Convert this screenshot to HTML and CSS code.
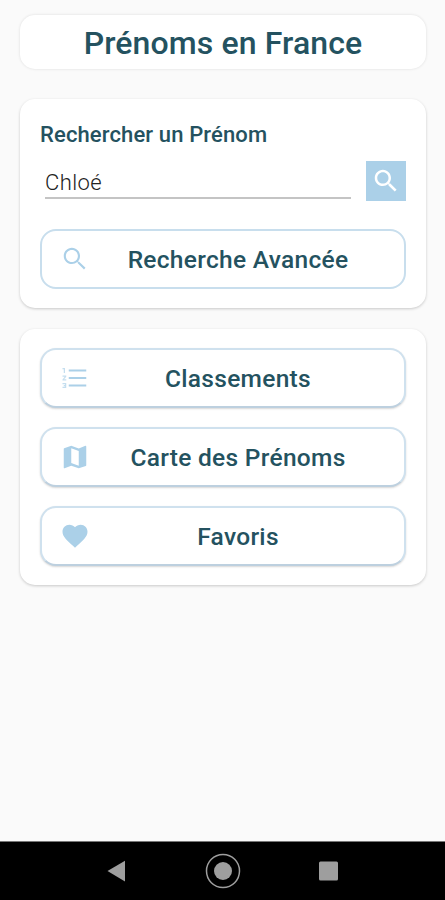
FILE: index.html
```
<!DOCTYPE html>
<html lang="fr">
<head>
<meta charset="utf-8">
<meta name="viewport" content="width=device-width, initial-scale=1">
	<title>Prénoms en France</title>
<link rel="stylesheet" href="styles.css">
</head>
<body>

<div class="content">
	<h1 class="card title">Prénoms en France</h1>

	<div class="card search">
		<label class="label" for="prenom">Rechercher un Prénom</label>
		<div class="row">
			<input id="prenom" class="field" type="text" value="Chloé" spellcheck="false">
			<button class="go" aria-label="Rechercher">
				<svg class="icon" viewBox="0 0 24 24"><path d="M15.5 14h-.79l-.28-.27C15.41 12.59 16 11.11 16 9.5 16 5.91 13.09 3 9.5 3S3 5.91 3 9.5 5.91 16 9.5 16c1.61 0 3.09-.59 4.23-1.57l.27.28v.79l5 4.99L20.49 19l-4.99-5zm-6 0C7.01 14 5 11.99 5 9.5S7.01 5 9.5 5 14 7.01 14 9.5 11.99 14 9.5 14z"/></svg>
			</button>
		</div>
		<button class="btn flat">
			<svg class="icon" viewBox="0 0 24 24"><path d="M15.3 14.2h-.6l-.3-.4C15.5 12.6 16 11.1 16 9.5 16 5.9 13.1 3 9.5 3S3 5.9 3 9.5 5.9 16 9.5 16c1.6 0 3.1-.6 4.3-1.6l.4.3v.6l5 5 1.2-1.2zM9.5 14.3c-2.7 0-4.8-2.1-4.8-4.8s2.1-4.8 4.8-4.8 4.8 2.1 4.8 4.8-2.1 4.8-4.8 4.8z"/></svg>
			<span>Recherche Avancée</span>
		</button>
	</div>

	<div class="card menu">
		<button class="btn">
			<svg class="icon" viewBox="0 0 24 24"><path class="digits" d="M2 17h2v.5H3v1h1v.5H2v1h3v-4H2v1zm1-9h1V4H2v1h1v3zm-1 3h1.8L2 13.1v.9h3v-1H3.2L5 10.9V10H2v1z"/><path d="M7 5.2v1.5h14V5.2H7zm0 13.5h14v-1.5H7v1.5zm0-6h14v-1.5H7v1.5z"/></svg>
			<span>Classements</span>
		</button>
		<button class="btn">
			<svg class="icon" viewBox="0 0 24 24"><path d="M20.5 3l-.16.03L15 5.1 9 3 3.36 4.9c-.21.07-.36.25-.36.48V20.5c0 .28.22.5.5.5l.16-.03L9 18.9l6 2.1 5.64-1.9c.21-.07.36-.25.36-.48V3.5c0-.28-.22-.5-.5-.5zM15 19l-6-2.11V5l6 2.11V19z"/></svg>
			<span>Carte des Prénoms</span>
		</button>
		<button class="btn">
			<svg class="icon" viewBox="0 0 24 24"><path d="M12 21.35l-1.45-1.32C5.4 15.36 2 12.28 2 8.5 2 5.42 4.42 3 7.5 3c1.74 0 3.41.81 4.5 2.09C13.09 3.81 14.76 3 16.5 3 19.58 3 22 5.42 22 8.5c0 3.78-3.4 6.86-8.55 11.54L12 21.35z"/></svg>
			<span>Favoris</span>
		</button>
	</div>
</div>

<div class="navbar">
	<svg viewBox="0 0 36 36"><path d="M8.5 18L26 7.8v20.600z"/></svg>
	<svg viewBox="0 0 36 36"><circle class="ring" cx="18" cy="18" r="16.5"/><circle cx="18" cy="18" r="9"/></svg>
	<svg viewBox="0 0 36 36"><rect x="8" y="8.5" width="19" height="19" rx="1.5"/></svg>
</div>

</body>
</html>
```
FILE: styles.css
```
*{
	box-sizing: border-box;
}

body{
	margin: 0;
	height: 900px;
	display: flex;
	flex-direction: column;
	background: #fafafa;
	font-family: Roboto, sans-serif;
	color: #245260;
}

.content{
	flex: 1;
	padding: 15px 19px 0 20px;
}

.card{
	background: #fff;
	border-radius: 15px;
	box-shadow: 0 1px 3px rgba(0,0,0,.2);
}

.title{
	margin: 0 0 30px;
	height: 54px;
	line-height: 56px;
	text-align: center;
	font-size: 32px;
	font-weight: 500;
	letter-spacing: .12px;
	box-shadow: 0 0 3px rgba(0,0,0,.12);
}

.search{
	height: 209px;
	padding: 20px 20px 0;
	margin-bottom: 21px;
}

.label{
	display: block;
	height: 42px;
	line-height: 31px;
	font-size: 22px;
	font-weight: 500;
	letter-spacing: .13px;
}

.row{
	display: flex;
	height: 40px;
	margin-bottom: 28px;
}

.field{
	width: 306px;
	height: 38px;
	margin: 0 15px 0 5px;
	padding: 7px 0 0;
	border: 0;
	border-bottom: 2px solid #c4c4c4;
	outline: none;
	background: none;
	font: 300 22px Roboto, sans-serif;
	letter-spacing: .4px;
	color: #222;
}

.go{
	width: 40px;
	height: 40px;
	padding: 5px;
	border: 0;
	background: #abd0e8;
}

.icon{
	display: block;
	flex: none;
	width: 30px;
	height: 30px;
	fill: #abd0e8;
}

.go .icon{
	fill: #fff;
}

.digits{
	opacity: .7;
}

.btn{
	display: flex;
	align-items: center;
	width: 366px;
	height: 60px;
	padding: 0 18px;
	border: 2px solid #cfe1ee;
	border-bottom-color: #bdd0df;
	border-radius: 16px;
	background: #fff;
	box-shadow: 0 1px 2px rgba(0,0,0,.16);
	font: 500 24.5px Roboto, sans-serif;
	color: #245260;
}

.btn span{
	flex: 1;
	letter-spacing: .3px;
	text-align: center;
}

.flat{
	border-color: #c8deed;
	box-shadow: none;
}

.menu{
	display: flex;
	flex-direction: column;
	gap: 19px;
	height: 256px;
	padding: 19px 20px 0;
}

.navbar{
	display: flex;
	justify-content: center;
	align-items: center;
	gap: 70px;
	height: 59px;
	border-top: 1px solid #777;
	background: #000;
}

.navbar svg{
	width: 36px;
	height: 36px;
	fill: #9e9e9e;
}

.navbar .ring{
	fill: none;
	stroke: #9e9e9e;
	stroke-width: 1.5;
}
```
